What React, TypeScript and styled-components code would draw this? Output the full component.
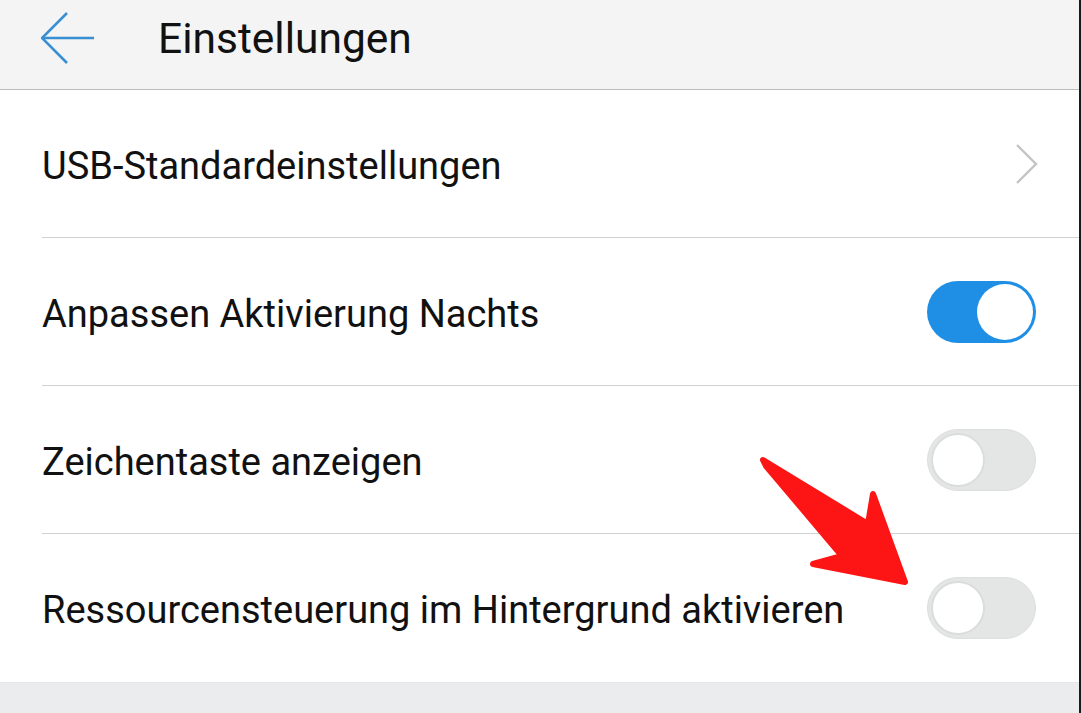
import React from 'react';
import styled, { createGlobalStyle } from 'styled-components';

const GlobalStyle = createGlobalStyle`
  html, body {
    margin: 0;
    padding: 0;
    background: #ffffff;
  }
  body {
    font-family: Roboto, "Noto Sans", "Liberation Sans", sans-serif;
    color: #111;
  }
`;

const Screen = styled.div`
  position: relative;
  width: 1081px;
  height: 713px;
  display: flex;
  flex-direction: column;
  overflow: hidden;
  background: #fff;
  box-sizing: border-box;
  border-right: 2px solid #1a1a1a;
`;

const Header = styled.header`
  height: 90px;
  flex-shrink: 0;
  display: flex;
  align-items: center;
  background: #f3f4f3;
  border-bottom: 1.5px solid #b9bdbc;
  box-sizing: border-box;
`;

const BackButton = styled.button`
  border: 0;
  background: none;
  padding: 0;
  margin-left: 41px;
  width: 54px;
  height: 52px;
  display: flex;
  align-items: center;
  justify-content: center;
  margin-top: -14px;
`;

const Title = styled.h1`
  margin: -12px 0 0 63px;
  font-size: 42.5px;
  font-weight: 400;
  color: #111;
`;

const List = styled.div`
  flex: 1;
  display: flex;
  flex-direction: column;
`;

const Row = styled.div<{ $last?: boolean }>`
  height: 148px;
  box-sizing: border-box;
  margin-left: 42px;
  padding-right: 43px;
  display: flex;
  align-items: center;
  justify-content: space-between;
  border-bottom: ${({ $last }) => ($last ? 'none' : '1.5px solid #d0d2d1')};
`;

const Label = styled.span`
  font-size: 38px;
  color: #111;
  white-space: nowrap;
  padding-top: 4px;
`;

const Track = styled.div<{ $on?: boolean }>`
  width: 109px;
  height: 62px;
  border-radius: 31px;
  box-sizing: border-box;
  padding: 3px;
  display: flex;
  justify-content: ${({ $on }) => ($on ? 'flex-end' : 'flex-start')};
  background: ${({ $on }) => ($on ? '#1f8fe6' : '#e3e6e4')};
  border: ${({ $on }) => ($on ? 'none' : '1px solid #dcdfdd')};
`;

const Knob = styled.div<{ $on?: boolean }>`
  width: ${({ $on }) => ($on ? '56px' : '54px')};
  height: ${({ $on }) => ($on ? '56px' : '54px')};
  border-radius: 50%;
  background: #fff;
  box-sizing: border-box;
  border: ${({ $on }) => ($on ? 'none' : '2px solid #dadddb')};
`;

const ChevronIcon = styled.svg`
  margin-right: -3px;
`;

const Footer = styled.div`
  height: 31px;
  flex-shrink: 0;
  background: #eaeced;
  border-top: 1px solid #e4e6e7;
`;

const Arrow = styled.svg`
  position: absolute;
  left: 0;
  top: 0;
  pointer-events: none;
`;

const Toggle = ({ on }: { on?: boolean }) => (
  <Track $on={on}>
    <Knob $on={on} />
  </Track>
);

const Chevron = () => (
  <ChevronIcon width="24" height="40" viewBox="0 0 24 40">
    <polyline points="2,1 21,20 2,39" fill="none" stroke="#c2c3c3" strokeWidth="2.4" />
  </ChevronIcon>
);

export default function App() {
  return (
    <>
      <GlobalStyle />
      <Screen>
        <Header>
          <BackButton aria-label="Zurück">
            <svg width="54" height="52" viewBox="0 0 54 52">
              <polyline points="26,1 1,26 26,51" fill="none" stroke="#3a8fd3" strokeWidth="2.6" />
              <line x1="1" y1="26" x2="53" y2="26" stroke="#3a8fd3" strokeWidth="2.6" />
            </svg>
          </BackButton>
          <Title>Einstellungen</Title>
        </Header>
        <List>
          <Row>
            <Label>USB-Standardeinstellungen</Label>
            <Chevron />
          </Row>
          <Row>
            <Label>Anpassen Aktivierung Nachts</Label>
            <Toggle on />
          </Row>
          <Row>
            <Label>Zeichentaste anzeigen</Label>
            <Toggle />
          </Row>
          <Row $last>
            <Label>Ressourcensteuerung im Hintergrund aktivieren</Label>
            <Toggle />
          </Row>
        </List>
        <Footer />
        <Arrow width="1081" height="713" viewBox="0 0 1081 713">
          <polygon
            points="763,460 868,524 873,494 905,582 813,564 842,556 766,466"
            fill="#fd1515"
            stroke="#fd1515"
            strokeWidth="6"
            strokeLinejoin="round"
          />
        </Arrow>
      </Screen>
    </>
  );
}
